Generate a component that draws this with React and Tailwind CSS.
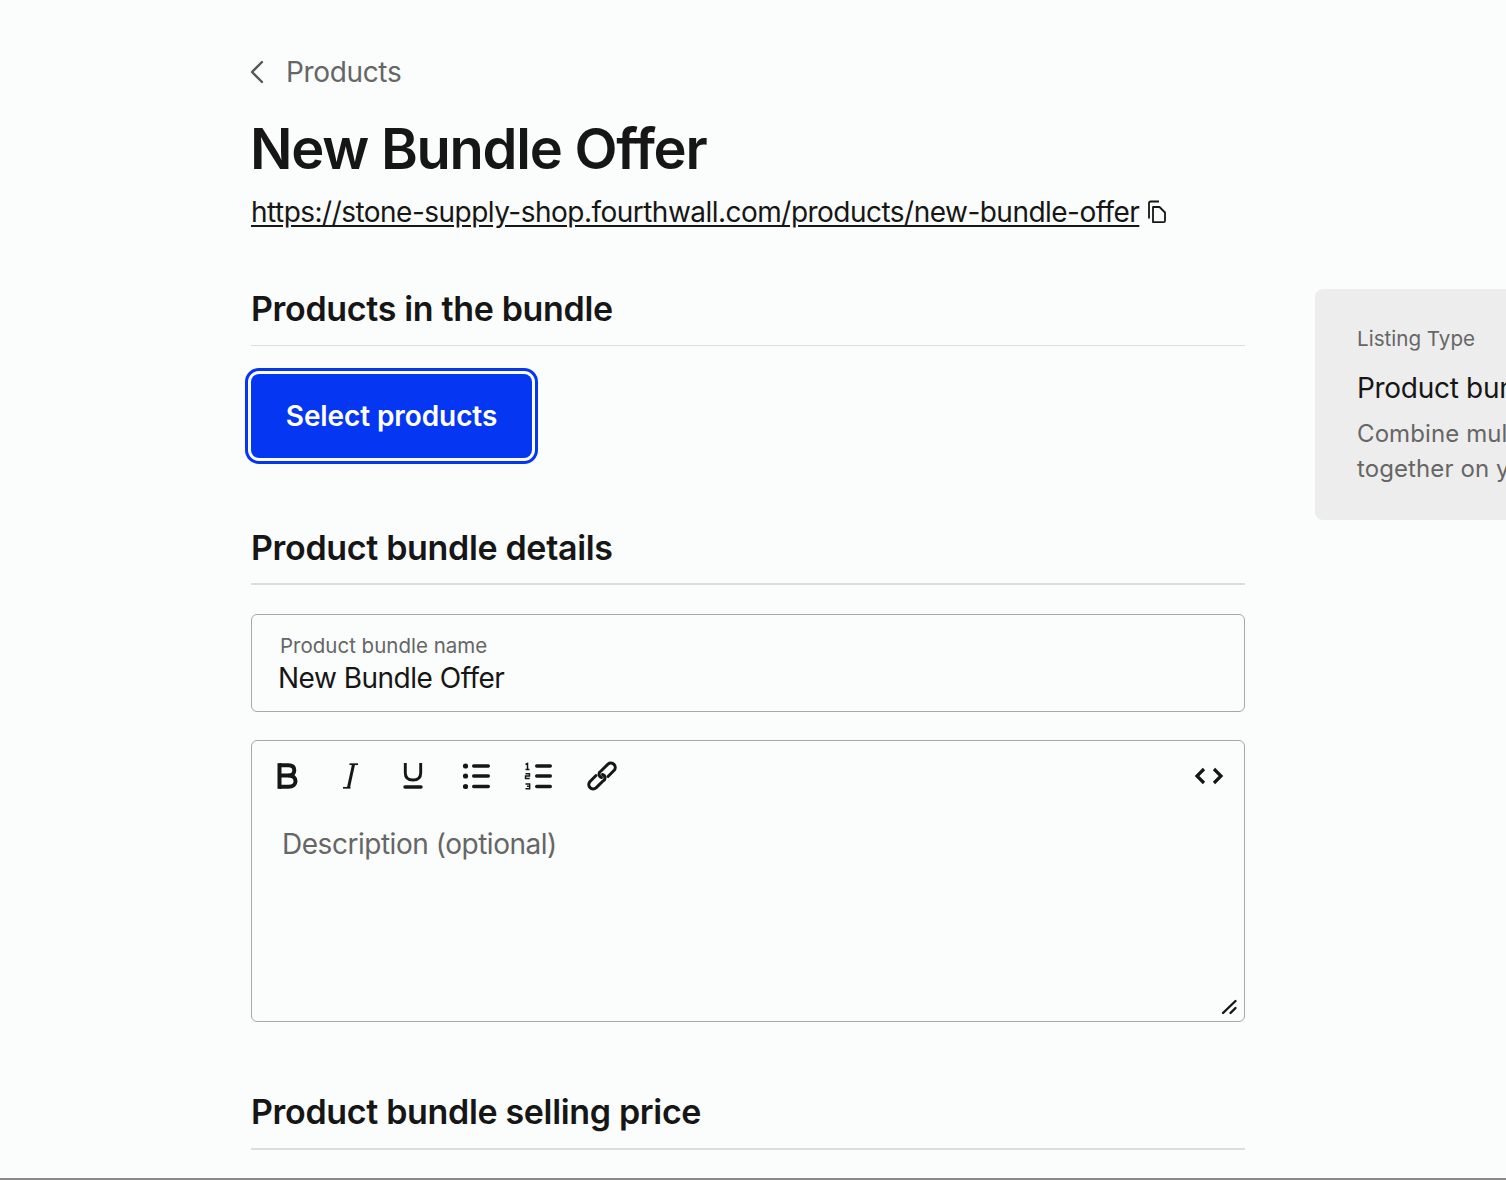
import React from 'react';
import { ChevronLeft } from 'lucide-react';

const Heading = ({ children, className = '' }) => (
  <h2 className={`text-[34px] leading-[40px] font-semibold tracking-[-0.33px] text-[#161616] ${className}`}>{children}</h2>
);

const CopyIcon = () => (
  <svg width="20" height="24" viewBox="0 0 20 24" fill="none" stroke="#161616" strokeWidth="1.8" strokeLinejoin="round" className="shrink-0">
    <path d="M6 22.200V7h6.500l5.500 5.500v8.300a1.400 1.400 0 0 1-1.400 1.400z" />
    <path d="M2 18.500V3.200A1.700 1.700 0 0 1 3.700 1.500H12" />
  </svg>
);

const BoldIcon = () => (
  <svg width="24" height="28" viewBox="0 0 24 28" fill="none" stroke="#161616" strokeWidth="4">
    <path d="M3.500 3.200h9c3.800 0 5.800 2 5.800 5s-2 5.400-5.800 5.400h-9" />
    <path d="M12.500 13.600c4.500 0 7 2.300 7 5.600s-2.500 5.600-7 5.600h-9" />
    <path d="M3.500 1.200v25.600" />
  </svg>
);

const ItalicIcon = () => (
  <svg width="24" height="28" viewBox="0 0 24 28" fill="none" stroke="#161616" strokeWidth="3">
    <path d="M11.500 2.200h8.500" strokeWidth="1.700" />
    <path d="M15.500 2.500 10.500 25.500" />
    <path d="M5 25.800h7.500" strokeWidth="1.700" />
  </svg>
);

const UnderlineIcon = () => (
  <svg width="24" height="28" viewBox="0 0 24 28" fill="none" stroke="#161616" strokeWidth="2.900">
    <path d="M4.300 1v10c0 5 3 7 7.700 7s7.700-2 7.700-7V1" />
    <path d="M4 25h16" strokeWidth="3.400" strokeLinecap="round" />
  </svg>
);

const BulletIcon = () => (
  <svg width="30" height="28" viewBox="0 0 30 28" fill="#161616">
    <circle cx="2.500" cy="4" r="2.600" />
    <circle cx="2.500" cy="14" r="2.600" />
    <circle cx="2.500" cy="24.500" r="2.600" />
    <rect x="9" y="2.300" width="18" height="3.400" rx="1.700" />
    <rect x="9" y="12.300" width="18" height="3.400" rx="1.700" />
    <rect x="9" y="22.800" width="18" height="3.400" rx="1.700" />
  </svg>
);

const NumberIcon = () => (
  <svg width="30" height="28" viewBox="0 0 30 28" fill="none" stroke="#161616">
    <path d="M1.500 2.500 3.500 1.500V7.500M1.500 7.500h4" strokeWidth="1.500" />
    <path d="M1.500 11.700h4V14h-4v2.500h4.200" strokeWidth="1.400" />
    <path d="M1.500 22h4.200v2.300H3M5.700 24.300v2.500H1.500" strokeWidth="1.400" />
    <rect x="11" y="2.300" width="17" height="3.400" rx="1.700" fill="#161616" stroke="none" />
    <rect x="11" y="12.300" width="17" height="3.400" rx="1.700" fill="#161616" stroke="none" />
    <rect x="11" y="22.800" width="17" height="3.400" rx="1.700" fill="#161616" stroke="none" />
  </svg>
);

const LinkIcon = () => (
  <svg width="32" height="32" viewBox="0 0 32 32" fill="none" stroke="#161616" strokeWidth="3" strokeLinecap="round" strokeLinejoin="round">
    <path d="M10 15.500 3.800 21.700A4.400 4.400 0 0 0 10 27.900L17 21A3.500 3.500 0 0 0 16.500 14.500" />
    <path d="M22 16.500 28.200 10.300A4.400 4.400 0 0 0 22 4.100L15 11A3.500 3.500 0 0 0 15.500 17.500" />
  </svg>
);

const CodeIcon = () => (
  <svg width="32" height="20" viewBox="0 0 32 20" fill="none" stroke="#161616" strokeWidth="3.200" strokeLinejoin="miter">
    <path d="M11 3 4 10l7 7M21 3l7 7-7 7" />
  </svg>
);

const ResizeIcon = () => (
  <svg width="18" height="16" viewBox="0 0 18 16" fill="none" stroke="#161616" strokeWidth="2.400" strokeLinecap="round">
    <path d="M2 14 14.500 2M9.500 14l5-5" />
  </svg>
);

export default function App() {
  return (
    <div className="w-[1506px] h-[1180px] overflow-hidden bg-[#fbfcfc] border-b-2 border-[#8a8a8a] font-['Inter',sans-serif] flex">
      <main className="w-[994px] ml-[251px] shrink-0 pt-[52px]">
        <a className="flex items-center gap-[9px] h-[40px] text-[#666666] text-[28px]">
          <ChevronLeft size={40} strokeWidth={1.4} className="-ml-[14px] text-[#555555]" />
          <span className="tracking-[-0.35px]">Products</span>
        </a>

        <h1 className="mt-[25px] -ml-[1px] text-[56px] leading-[64px] font-semibold tracking-[-1.25px] text-[#161616]">New Bundle Offer</h1>

        <div className="mt-[13px] flex items-center gap-[8px] h-[36px]">
          <a className="text-[28px] leading-[36px] underline underline-offset-[3px] tracking-[-0.52px] text-[#161616] whitespace-nowrap">
            https://stone-supply-shop.fourthwall.com/products/new-bundle-offer
          </a>
          <CopyIcon />
        </div>

        <section className="mt-[59px]">
          <Heading className="pb-[16px] border-b border-[#dddddd]">Products in the bundle</Heading>
          <button className="mt-[28px] w-[281px] h-[84px] rounded-[8px] bg-[#0537f2] text-white text-[28px] font-semibold tracking-[-0.1px] outline-[3px] outline-offset-[3px] outline-[#0537f2] border-0">
            Select products
          </button>
        </section>

        <section className="mt-[70px]">
          <Heading className="pb-[15px] border-b-2 border-[#dddddd]">Product bundle details</Heading>

          <div className="mt-[29px] h-[98px] rounded-[6px] border border-[#a8a8a8] pl-[26px] pt-[18px]">
            <div className="pl-[2px] text-[20.5px] leading-[26px] text-[#666666]">Product bundle name</div>
            <div className="mt-[1px] text-[28px] leading-[36px] tracking-[-0.5px] text-[#161616]">New Bundle Offer</div>
          </div>

          <div className="mt-[28px] h-[282px] rounded-[6px] border border-[#a8a8a8] relative">
            <div className="flex items-center h-[70px] pl-[24px] pr-[19px]">
              <div className="flex items-center">
                <BoldIcon />
                <div className="ml-[38px]"><ItalicIcon /></div>
                <div className="ml-[39px]"><UnderlineIcon /></div>
                <div className="ml-[38px]"><BulletIcon /></div>
                <div className="ml-[31px]"><NumberIcon /></div>
                <div className="ml-[32px]"><LinkIcon /></div>
              </div>
              <div className="ml-auto"><CodeIcon /></div>
            </div>
            <div className="pl-[30px] pt-[15px] text-[28px] leading-[36px] tracking-[-0.47px] text-[#666666]">Description (optional)</div>
            <div className="absolute right-[5px] bottom-[6px]"><ResizeIcon /></div>
          </div>
        </section>

        <section className="mt-[70px]">
          <Heading className="pb-[16px] border-b-2 border-[#dddddd]">Product bundle selling price</Heading>
        </section>
      </main>

      <aside className="ml-[70px] mt-[289px] w-[400px] h-[231px] shrink-0 rounded-[8px] bg-[#ededed] pl-[42px] pt-[36px]">
        <div className="text-[20.6px] leading-[28px] text-[#666666]">Listing Type</div>
        <div className="mt-[17px] text-[28px] leading-[36px] tracking-[-0.3px] text-[#161616] whitespace-nowrap">Product bundle</div>
        <p className="mt-[10px] text-[24px] leading-[35px] tracking-[0.1px] text-[#666666] w-[380px]">Combine multiple products together on your site</p>
      </aside>
    </div>
  );
}
